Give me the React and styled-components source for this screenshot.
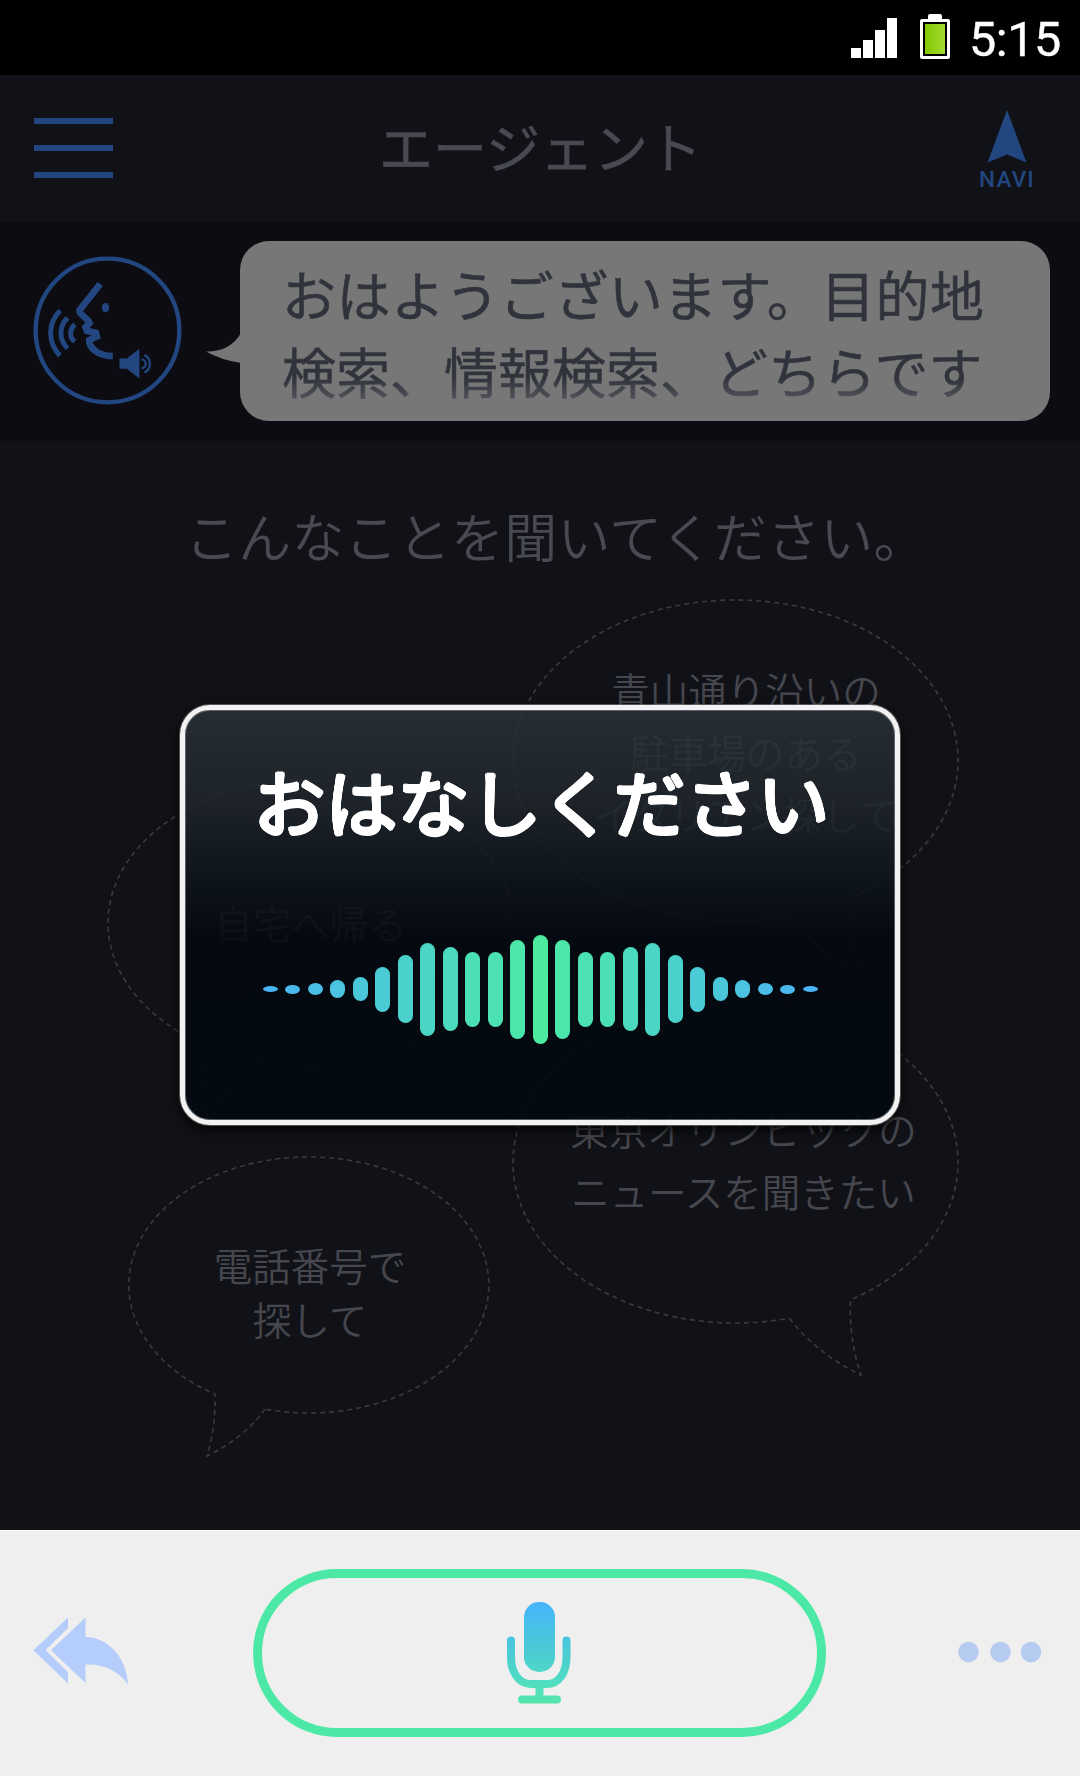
import React from 'react';
import styled, { createGlobalStyle } from 'styled-components';

const Colors = {
  panel: '#111217',
  panelDark: '#0c0c12',
  blue: '#22467f',
  dimText: '#484951',
  green: '#4be9a5',
  footer: '#efefef',
};

const Fonts = {
  jp: '"Noto Sans CJK JP", sans-serif',
  latin: 'Roboto, sans-serif',
};

// Grows the glyphs evenly in all directions so that stroke ends look round
const roundedShadow = (radius, color) =>
  Array.from({ length: 16 }, (_, i) => {
    const angle = (i / 16) * Math.PI * 2;
    const x = (Math.cos(angle) * radius).toFixed(2);
    const y = (Math.sin(angle) * radius).toFixed(2);
    return `${x}px ${y}px 0 ${color}`;
  }).join(', ');

const GlobalStyle = createGlobalStyle`
  body {
    margin: 0;
    background-color: ${Colors.panel};
  }

  * {
    box-sizing: border-box;
  }

  svg {
    display: block;
  }
`;

const Screen = styled.div`
  position: relative;
  display: flex;
  flex-direction: column;
  width: 1080px;
  height: 1776px;
  overflow: hidden;
  font-family: ${Fonts.jp};
  background-color: ${Colors.panel};
`;

const StatusBar = styled.div`
  display: flex;
  justify-content: flex-end;
  align-items: flex-start;
  height: 75px;
  padding: 14px 18px 0 0;
  background-color: #000;
`;

const Signal = styled.div`
  display: flex;
  align-items: flex-end;
  gap: 2px;
  height: 44px;
`;

const SignalBar = styled.span`
  width: 10px;
  height: ${({ $height }) => $height}px;
  background-color: #fff;
`;

const Battery = styled.div`
  display: flex;
  flex-direction: column;
  align-items: center;
  width: 30px;
  margin: 0 19px 0 23px;

  &::before {
    content: '';
    width: 14px;
    height: 5px;
    border-radius: 2px 2px 0 0;
    background-color: #fff;
  }
`;

const BatteryCell = styled.div`
  width: 30px;
  height: 40px;
  padding: 2px;
  border: 3px solid #fff;
  border-radius: 2px;
  background: linear-gradient(90deg, #84c800, #a2dc32) content-box;
`;

const Clock = styled.span`
  width: 93px;
  font-family: ${Fonts.latin};
  font-size: 48.5px;
  line-height: 52px;
  letter-spacing: -0.4px;
  color: #fff;
  -webkit-text-stroke: 0.4px #fff;
`;

const Header = styled.header`
  display: grid;
  grid-template-columns: 113px 1fr 113px;
  height: 147px;
  padding: 0 33px 0 34px;
`;

const MenuButton = styled.div`
  display: flex;
  flex-direction: column;
  gap: 21px;
  padding-top: 42.5px;

  span {
    width: 79px;
    height: 6px;
    background-color: ${Colors.blue};
  }
`;

const Title = styled.h1`
  margin: 0;
  font-size: 54px;
  font-weight: 400;
  line-height: 141px;
  text-align: center;
  color: ${Colors.dimText};
  -webkit-text-stroke: 0.6px ${Colors.dimText};
`;

const Navi = styled.div`
  display: flex;
  flex-direction: column;
  align-items: center;
  justify-self: end;
  width: 80px;
  padding-top: 35px;
  font-family: ${Fonts.latin};
  font-size: 22.5px;
  font-weight: 500;
  line-height: 26px;
  letter-spacing: 1.2px;
  color: ${Colors.blue};

  svg {
    margin-bottom: 3px;
  }
`;

const AgentRow = styled.section`
  display: flex;
  align-items: flex-start;
  height: 219px;
  padding: 19px 30px 0 33px;
  background-color: ${Colors.panelDark};

  .face {
    margin-top: 15px;
  }

  .tail {
    margin: 92px -1px 0 24px;
  }
`;

const Speech = styled.div`
  flex: 1;
  height: 180px;
  padding: 14px 0 0 42px;
  border-radius: 29px;
  background-color: #777;
`;

const SpeechLine = styled.p`
  margin: 0;
  width: 715px;
  font-size: 54px;
  line-height: 77px;
  letter-spacing: ${({ $fade }) => ($fade ? 0 : 0.45)}px;
  white-space: nowrap;
  color: transparent;
  background: ${({ $fade }) =>
    $fade ? 'linear-gradient(#30333c 60%, #54565c 90%)' : '#30333c'};
  background-clip: text;
  -webkit-text-stroke: 0.6px transparent;
`;

const Suggestions = styled.main`
  position: relative;
  height: 1089px;
  padding-left: 185px;
`;

const Heading = styled.h2`
  margin: 0;
  padding-top: 54px;
  font-size: 53px;
  font-weight: 350;
  line-height: 80px;
  letter-spacing: 0.2px;
  color: ${Colors.dimText};
`;

const Balloon = styled.div`
  position: absolute;
  left: ${({ $x }) => $x}px;
  top: ${({ $y }) => $y}px;
  width: ${({ $w }) => $w}px;
  height: ${({ $h }) => $h}px;

  svg {
    overflow: visible;
  }
`;

const BalloonText = styled.p`
  position: absolute;
  top: ${({ $top }) => $top}px;
  left: 50%;
  margin: 0;
  transform: translateX(calc(-50% + ${({ $shift }) => $shift}px));
  font-size: 38.5px;
  font-weight: 350;
  line-height: ${({ $leading }) => $leading}px;
  text-align: center;
  white-space: pre;
  color: #46474e;
`;

const Dialog = styled.div`
  position: absolute;
  top: 705px;
  left: 180px;
  display: flex;
  flex-direction: column;
  align-items: center;
  width: 720px;
  height: 420px;
  border: 5px solid #f2f2f2;
  border-radius: 30px;
  background: linear-gradient(
    rgba(42, 50, 56, 0.84) 0%,
    rgba(31, 38, 44, 0.85) 22%,
    rgba(14, 20, 28, 0.87) 42%,
    rgba(3, 8, 16, 0.88) 56%,
    rgba(2, 9, 15, 0.92) 100%
  ) padding-box;
  box-shadow: 0 0 0 1px rgba(130, 130, 130, 0.6), 0 5px 12px rgba(0, 0, 0, 0.9),
    inset 0 0 0 1px rgba(120, 125, 130, 0.7);
`;

const DialogTitle = styled.h3`
  margin: 38px 0 0 3px;
  font-size: 72px;
  font-weight: 400;
  line-height: 104px;
  color: #fff;
  text-shadow: ${roundedShadow(1.6, '#fff')};
`;

const Wave = styled.div`
  display: flex;
  align-items: center;
  gap: 7.5px;
  height: 110px;
  margin-top: 82px;
`;

const WaveBar = styled.span`
  width: 15px;
  height: ${({ $height }) => $height}px;
  border-radius: 7.5px / ${({ $height }) => Math.min(7.5, $height / 2)}px;
  background-color: ${({ $color }) => $color};
`;

const Footer = styled.footer`
  display: flex;
  justify-content: space-between;
  height: 246px;
  padding: 38px 38px 0 33px;
  border-top: 1px solid #fafafa;
  background-color: ${Colors.footer};
`;

const MicButton = styled.div`
  display: flex;
  justify-content: center;
  width: 573px;
  height: 168px;
  margin-right: 8px;
  padding-top: 24px;
  border: 9px solid ${Colors.green};
  border-radius: 84px;
`;

const BackIcon = styled.svg`
  margin-top: 48px;
`;

const MoreIcon = styled.svg`
  margin-top: 72px;
`;

const WAVE_HALF = [
  [6, '#4bb4f4'],
  [9, '#4bb9ee'],
  [12, '#4bbee8'],
  [18, '#4bc3e1'],
  [24, '#4bc7da'],
  [45, '#4bcbd4'],
  [68, '#4bd1cb'],
  [93, '#4bd5c5'],
  [84, '#4bdabd'],
  [75, '#4bdfb5'],
  [75, '#4be1b2'],
  [99, '#4be6aa'],
  [109, '#4bea9f'],
];

const WAVE = [...WAVE_HALF, ...WAVE_HALF.slice(0, -1).reverse()];

const RIGHT_TAIL = 'M276.5 316.2 Q304 352 348 373 Q336 339 337.5 297.9 A222.5 160.5 0 1 0 276.5 316.2';

const BALLOONS = [
  {
    x: 512.5,
    y: 158.5,
    w: 445,
    h: 321,
    path: RIGHT_TAIL,
    text: ['青山通り沿いの', '駐車場のある', 'イタリアン探して'],
    top: 58.5,
    leading: 62,
    shift: 11,
  },
  {
    x: 107.5,
    y: 339,
    w: 404,
    h: 286,
    path: 'M153 281.7 Q128 315 87 331 Q99 300 96 264.7 A202 143 0 1 1 153 281.7',
    text: ['自宅へ帰る'],
    top: 111,
    leading: 62,
    shift: 1,
  },
  {
    x: 512.5,
    y: 560.5,
    w: 445,
    h: 321,
    path: RIGHT_TAIL,
    text: ['東京オリンピックの', 'ニュースを聞きたい'],
    top: 95.5,
    leading: 62,
    shift: 8.5,
  },
  {
    x: 128.5,
    y: 716,
    w: 360,
    h: 256,
    path: 'M136 252.1 Q115 281 78 299 Q87 270 86 237.2 A180 128 0 1 1 136 252.1',
    text: ['電話番号で', '探して'],
    top: 80,
    leading: 54,
    shift: 1.5,
  },
];

const FaceIcon = () => (
  <svg className="face" width="149" height="149" viewBox="100 527 448 448" fill="none" stroke={Colors.blue}>
    <circle cx="324" cy="751" r="216" strokeWidth="13" />
    <path
      d="M302 611 L240 690 Q239 697 247 704 L266 721 L270 729 L258 741 L262 752 L289 758 L292 769 L269 780 Q268 798 288 813 Q306 827 340 828"
      strokeWidth="20"
    />
    <path d="M182 691 Q153 720 153 758 Q153 797 181 827 M204 713 Q184 732 184 758 Q184 786 204 805 M226 733 Q213 744 213 760 Q213 776 226 784" strokeWidth="15" />
    <ellipse cx="318" cy="682" rx="10.5" ry="14" fill={Colors.blue} stroke="none" />
    <path d="M360 835 H382 L420 806 V895 L382 866 H360 Z" fill={Colors.blue} stroke="none" />
    <path d="M426 838 A13 13 0 0 1 426 864 M435 825 A26 28 0 0 1 435 877" strokeWidth="7" />
  </svg>
);

const MicIcon = () => (
  <svg width="64" height="103" viewBox="507 1602 64 103" fill="none">
    <defs>
      <linearGradient id="mic" gradientUnits="userSpaceOnUse" x1="0" y1="1602" x2="0" y2="1704">
        <stop offset="0" stopColor="#46b4fa" />
        <stop offset="0.5" stopColor="#4cccd4" />
        <stop offset="0.8" stopColor="#50dec0" />
        <stop offset="1" stopColor="#55e6ac" />
      </linearGradient>
    </defs>
    <rect x="524" y="1602" width="31" height="70" rx="15" fill="url(#mic)" />
    <path
      d="M511 1640.5 V1657 C511 1674 520 1684 531 1684 H547 C558 1684 566.5 1674 566.5 1657 V1640.5 M522 1699.5 H557 M539.5 1684 V1699"
      stroke="url(#mic)"
      strokeWidth="8"
      strokeLinecap="round"
    />
  </svg>
);

const App = () => {
  return (
    <>
      <GlobalStyle />
      <Screen>
        <StatusBar>
          <Signal>
            {[10, 18, 28, 40].map((height) => (
              <SignalBar key={height} $height={height} />
            ))}
          </Signal>
          <Battery>
            <BatteryCell />
          </Battery>
          <Clock>5:15</Clock>
        </StatusBar>

        <Header>
          <MenuButton>
            <span />
            <span />
            <span />
          </MenuButton>
          <Title>エージェント</Title>
          <Navi>
            <svg width="40" height="53" viewBox="0 0 40 53">
              <path d="M20 0 L39.5 52.5 L20 44.5 L0.5 52.5 Z" fill={Colors.blue} />
            </svg>
            NAVI
          </Navi>
        </Header>

        <AgentRow>
          <FaceIcon />
          <svg className="tail" width="35" height="30" viewBox="0 0 35 30">
            <path d="M0 18.5 Q24 19 35 0 V30 Q15 27 0 18.5 Z" fill="#777" />
          </svg>
          <Speech>
            <SpeechLine>おはようございます。目的地</SpeechLine>
            <SpeechLine $fade>検索、情報検索、どちらです</SpeechLine>
          </Speech>
        </AgentRow>

        <Suggestions>
          <Heading>こんなことを聞いてください。</Heading>
          {BALLOONS.map(({ x, y, w, h, path, text, top, leading, shift }) => (
            <Balloon key={text[0]} $x={x} $y={y} $w={w} $h={h}>
              <svg width={w} height={h} fill="none">
                <path d={path} stroke="#3a3b40" strokeWidth="1.6" strokeDasharray="5 4" />
              </svg>
              <BalloonText $top={top} $leading={leading} $shift={shift}>
                {text.join('\n')}
              </BalloonText>
            </Balloon>
          ))}
        </Suggestions>

        <Footer>
          <BackIcon width="95" height="68" viewBox="33 1616.5 95 68" fill="#b5cdfb">
            <path d="M68 1617 L33.4 1649.8 L68 1683 V1671.5 L45.5 1649.8 L68 1627.5 Z" />
            <path d="M85.5 1617 L51 1649.8 L85.5 1682.5 V1664 C104 1663 119 1671 128 1684 C127 1658 109 1637 85.5 1636.5 Z" />
          </BackIcon>
          <MicButton>
            <MicIcon />
          </MicButton>
          <MoreIcon width="84" height="22" viewBox="0 0 84 22" fill="#b6cbf0">
            <circle cx="10.5" cy="11" r="10.3" />
            <circle cx="42.5" cy="11" r="10.3" />
            <circle cx="73" cy="11" r="10.3" />
          </MoreIcon>
        </Footer>

        <Dialog>
          <DialogTitle>おはなしください</DialogTitle>
          <Wave>
            {WAVE.map(([height, color], idx) => (
              <WaveBar key={idx} $height={height} $color={color} />
            ))}
          </Wave>
        </Dialog>
      </Screen>
    </>
  );
};

export default App;
